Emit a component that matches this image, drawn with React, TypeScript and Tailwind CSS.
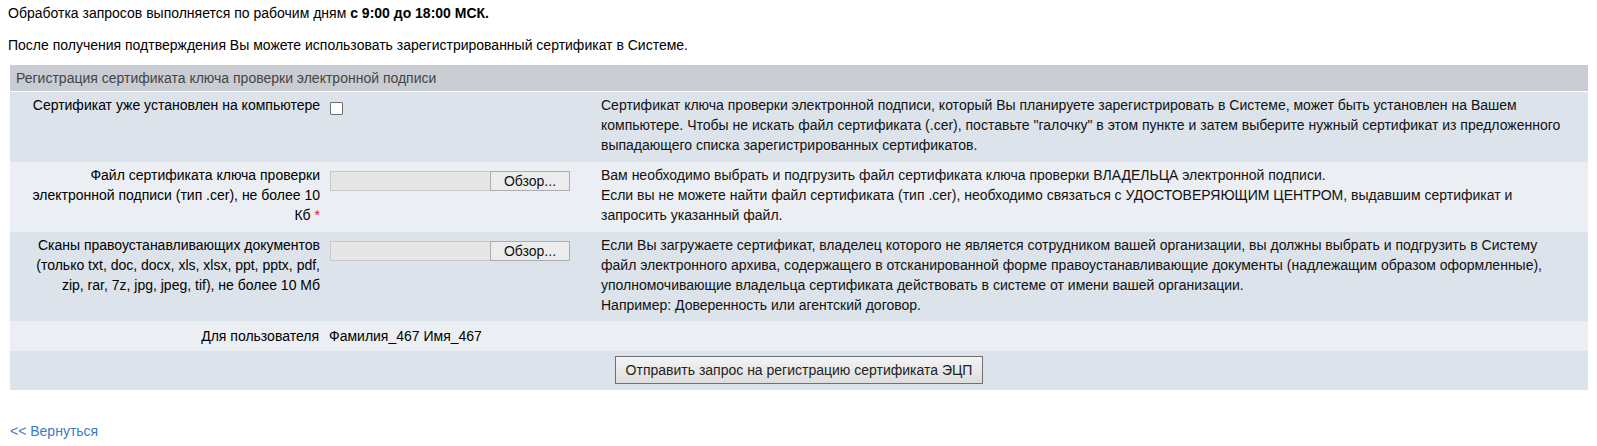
const rows = [
  {
    id: 1,
    bg: "bg-[#dce3ea]",
    help: (
      <>
        Сертификат ключа проверки электронной подписи, который Вы планируете зарегистрировать в Системе, может быть
        установлен на Вашем компьютере. Чтобы не искать файл сертификата (.cer), поставьте "галочку" в этом пункте и
        затем выберите нужный сертификат из предложенного выпадающего списка зарегистрированных сертификатов.
      </>
    ),
  },
];

function FileField() {
  return (
    <div className="flex mt-[6px]">
      <div className="w-[161px] h-[20px] bg-[#e6e6e6] border border-[#c8c8c8]" />
      <button className="w-[80px] h-[20px] bg-[#ececec] border border-[#adadad] text-[14px] leading-[18px] text-[#111] -ml-px">
        Обзор...
      </button>
    </div>
  );
}

export default function App() {
  return (
    <div className="bg-white pl-[8px] pr-[9px] pt-[3px] font-['Liberation_Sans',Arial,sans-serif] text-[14px] leading-[20px] text-black min-h-[446px]">
      <p>
        Обработка запросов выполняется по рабочим дням <b>с 9:00 до 18:00 МСК.</b>
      </p>
      <p className="mt-[12px]">После получения подтверждения Вы можете использовать зарегистрированный сертификат в Системе.</p>

      {/* ── Registration table ── */}
      <div className="ml-[2px] mt-[10px]">
        <div className="h-[27px] bg-[#c9ccd3] border-b border-white pl-[6px] flex items-center text-[#444]">
          Регистрация сертификата ключа проверки электронной подписи
        </div>

        <div className="grid grid-cols-[315px_271px_1fr]">
          {/* row 1 */}
          {rows.map(({ id, bg, help }) => (
            <div key={id} className={`col-span-3 grid grid-cols-subgrid ${bg} pt-[3px] pb-[7px]`}>
              <div className="text-right pr-[5px] pl-[5px]">Сертификат уже установлен на компьютере</div>
              <div className="pl-[5px]">
                <input
                  type="checkbox"
                  className="appearance-none block w-[13px] h-[13px] mt-[7px] border border-[#707070] bg-white rounded-[1px]"
                />
              </div>
              <div className="pl-[5px] pr-[12px] text-[#111]">{help}</div>
            </div>
          ))}

          {/* row 2 */}
          <div className="col-span-3 grid grid-cols-subgrid bg-[#ebeef2] pt-[3px] pb-[7px]">
            <div className="text-right pr-[5px] pl-[5px]">
              Файл сертификата ключа проверки электронной подписи (тип .cer), не более 10 Кб{" "}
              <span className="text-[#e0193c]">*</span>
            </div>
            <div className="pl-[5px]">
              <FileField />
            </div>
            <div className="pl-[5px] pr-[12px] text-[#111]">
              Вам необходимо выбрать и подгрузить файл сертификата ключа проверки ВЛАДЕЛЬЦА электронной подписи.
              <br />
              Если вы не можете найти файл сертификата (тип .cer), необходимо связаться с УДОСТОВЕРЯЮЩИМ ЦЕНТРОМ,
              выдавшим сертификат и запросить указанный файл.
            </div>
          </div>

          {/* row 3 */}
          <div className="col-span-3 grid grid-cols-subgrid bg-[#dce3ea] pt-[3px] pb-[6px]">
            <div className="text-right pr-[5px] pl-[5px]">
              Сканы правоустанавливающих документов (только txt, doc, docx, xls, xlsx, ppt, pptx, pdf, zip, rar, 7z,
              jpg, jpeg, tif), не более 10 Мб
            </div>
            <div className="pl-[5px]">
              <FileField />
            </div>
            <div className="pl-[5px] pr-[12px] text-[#111]">
              Если Вы загружаете сертификат, владелец которого не является сотрудником вашей организации, вы должны
              выбрать и подгрузить в Систему файл электронного архива, содержащего в отсканированной форме
              правоустанавливающие документы (надлежащим образом оформленные), уполномочивающие владельца сертификата
              действовать в системе от имени вашей организации.
              <br />
              Например: Доверенность или агентский договор.
            </div>
          </div>

          {/* row 4 */}
          <div className="col-span-3 grid grid-cols-subgrid bg-[#ebeef2] h-[30px] items-center">
            <div className="text-right pr-[6px] pl-[5px]">Для пользователя</div>
            <div className="pl-[4px] col-span-2">Фамилия_467 Имя_467</div>
          </div>

          {/* row 5 */}
          <div className="col-span-3 bg-[#dce3ea] pt-[5px] pb-[6px] flex justify-center">
            <button className="h-[28px] px-[10px] border border-[#707070] bg-gradient-to-b from-[#f4f4f4] to-[#dddddd] text-[14px] text-[#222]">
              Отправить запрос на регистрацию сертификата ЭЦП
            </button>
          </div>
        </div>
      </div>

      <a href="#" className="block ml-[2px] mt-[31px] text-[#3b7bc4]">
        &lt;&lt; Вернуться
      </a>
    </div>
  );
}
